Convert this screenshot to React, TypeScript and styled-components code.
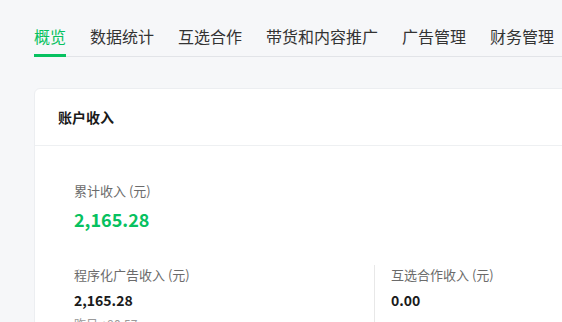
import { FC, useState } from "react";
import styled, { createGlobalStyle } from "styled-components";

const GlobalStyle = createGlobalStyle`
  html, body {
    margin: 0;
    padding: 0;
    overflow: hidden;
    background-color: #f6f7f9;
  }
  body {
    font-family: "Noto Sans CJK SC", "Noto Sans", sans-serif;
    color: #1a1a1a;
  }
`;

const tabs = ["概览", "数据统计", "互选合作", "带货和内容推广", "广告管理", "财务管理"];

interface TabProps {
  $active?: boolean;
}

interface StatProps {
  $divided?: boolean;
}

const App: FC = () => {
  const [active, setActive] = useState(0);

  return (
    <Page>
      <GlobalStyle />
      <TabBar>
        {tabs.map((tab, i) => (
          <Tab key={tab} $active={i === active} onClick={() => setActive(i)}>
            {tab}
          </Tab>
        ))}
      </TabBar>
      <Card>
        <CardHeader>
          <CardTitle>账户收入</CardTitle>
        </CardHeader>
        <CardBody>
          <Total>
            <Label>累计收入 (元)</Label>
            <TotalValue>2,165.28</TotalValue>
          </Total>
          <StatRow>
            <Stat>
              <Label>程序化广告收入 (元)</Label>
              <StatValue>2,165.28</StatValue>
              <Sub>昨日 +90.57</Sub>
            </Stat>
            <Stat $divided>
              <Label>互选合作收入 (元)</Label>
              <StatValue>0.00</StatValue>
            </Stat>
          </StatRow>
        </CardBody>
      </Card>
    </Page>
  );
};

const Page = styled.div`
  width: 1100px;
  padding: 24px 0 40px 34px;
  box-sizing: border-box;
`;

const TabBar = styled.nav`
  display: flex;
  gap: 24px;
  border-bottom: 1px solid #e2e4e8;
`;

const Tab = styled.div<TabProps>`
  height: 24px;
  padding-bottom: 6px;
  margin-bottom: -1px;
  font-size: 16px;
  line-height: 24px;
  color: ${(props) => (props.$active ? "#07c160" : "#333")};
  border-bottom: 3px solid ${(props) => (props.$active ? "#07c160" : "transparent")};
  cursor: pointer;
`;

const Card = styled.section`
  margin-top: 31px;
  background-color: #fff;
  border: 1px solid #eceef1;
  border-radius: 6px;
`;

const CardHeader = styled.header`
  display: flex;
  align-items: center;
  height: 56px;
  padding: 0 23px;
  border-bottom: 1px solid #eef0f2;
`;

const CardTitle = styled.h2`
  margin: 0;
  font-size: 14px;
  font-weight: 700;
  color: #1a1a1a;
`;

const CardBody = styled.div`
  padding: 35px 39px 40px;
`;

const Total = styled.div`
  margin-bottom: 32px;
`;

const Label = styled.div`
  font-size: 13px;
  line-height: 20px;
  color: #6b6b6b;
`;

const TotalValue = styled.div`
  margin-top: 4px;
  font-size: 18px;
  line-height: 28px;
  font-weight: 700;
  color: #07c160;
`;

const StatRow = styled.div`
  display: grid;
  grid-template-columns: 300px 300px;
`;

const Stat = styled.div<StatProps>`
  padding-left: ${(props) => (props.$divided ? "16px" : "0")};
  border-left: ${(props) => (props.$divided ? "1px solid #e8e8e8" : "none")};
`;

const StatValue = styled.div`
  margin-top: 4px;
  font-size: 14px;
  line-height: 22px;
  font-weight: 700;
  color: #1a1a1a;
`;

const Sub = styled.div`
  margin-top: 4px;
  font-size: 12px;
  line-height: 18px;
  color: #9a9a9a;
`;

export default App;
